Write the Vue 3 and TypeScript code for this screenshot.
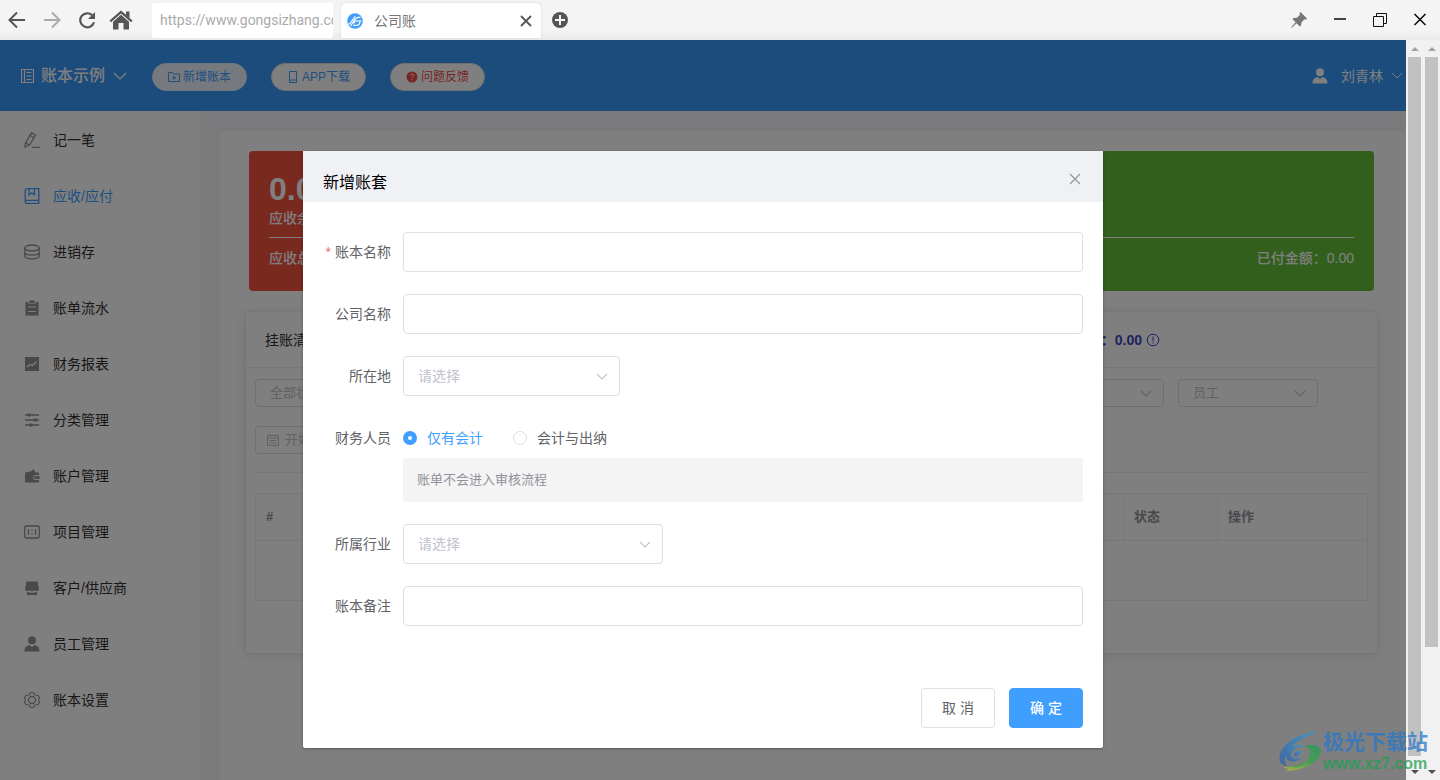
<script setup lang="ts">
import { ref } from 'vue'

interface MenuItem {
  label: string
  icon: string
}

const menu: MenuItem[] = [
  { label: '记一笔', icon: 'pen' },
  { label: '应收/应付', icon: 'book' },
  { label: '进销存', icon: 'coin' },
  { label: '账单流水', icon: 'order' },
  { label: '财务报表', icon: 'chart' },
  { label: '分类管理', icon: 'sliders' },
  { label: '账户管理', icon: 'wallet' },
  { label: '项目管理', icon: 'project' },
  { label: '客户/供应商', icon: 'shop' },
  { label: '员工管理', icon: 'user' },
  { label: '账本设置', icon: 'gear' },
]
const activeItem = ref('应收/应付')

const url = ref('https://www.gongsizhang.com')
const bookName = ref('')
const company = ref('')
const region = ref('')
const industry = ref('')
const remark = ref('')
const staff = ref('single')
</script>

<template>
  <div class="window">
    <header class="chrome">
      <nav class="chrome-nav">
        <button aria-label="后退">
          <svg width="18" height="18" viewBox="0 0 18 18"><path d="M17 9H2M9 1.5L1.5 9L9 16.500" fill="none" stroke="#555" stroke-width="2" /></svg>
        </button>
        <button aria-label="前进">
          <svg width="18" height="18" viewBox="0 0 18 18"><path d="M1 9H16M9 1.500L16.500 9L9 16.500" fill="none" stroke="#aaa" stroke-width="2" /></svg>
        </button>
        <button aria-label="刷新">
          <svg width="18" height="18" viewBox="0 0 18 18"><path d="M14.200 4.300A7 7 0 1 0 16 11.200" fill="none" stroke="#555" stroke-width="2.200" /><path d="M17 1V8H10Z" fill="#555" /></svg>
        </button>
        <button aria-label="主页">
          <svg width="24" height="20" viewBox="0 0 24 20"><path d="M12 0.500L23.500 10.600L22.100 12.200L12 3.400L1.900 12.200L0.500 10.600Z" fill="#555" /><path d="M17 1.500H20.500V8L17 5Z" fill="#555" /><path d="M12 4.800L20 11.700V19.500H14.500V13H9.500V19.500H4V11.700Z" fill="#555" /></svg>
        </button>
      </nav>
      <input v-model="url" class="address" type="text" aria-label="地址" />
      <div class="tab">
        <svg width="16" height="16" viewBox="0 0 16 16"><circle cx="8" cy="8" r="7.800" fill="#409eff" /><path d="M0.500 11.500L3 10.500L8.300 3.300M3.500 13L8 6.500C9 5 10 4.300 11.500 4.300H13.500M6.500 10.500L8.300 8H14.500M6.200 12.300H10.500C12 12 12.800 10.500 13 8.500" fill="none" stroke="#fff" stroke-width="1.200" /></svg>
        <span class="tab-title">公司账</span>
        <button aria-label="关闭标签">
          <svg width="12" height="12" viewBox="0 0 12 12"><path d="M1 1L11 11M11 1L1 11" stroke="#555" stroke-width="1.800" /></svg>
        </button>
      </div>
      <button class="add-tab" aria-label="新标签">
        <svg width="16" height="16" viewBox="0 0 16 16"><circle cx="8" cy="8" r="8" fill="#555" /><path d="M8 3V13M3 8H13" stroke="#f4f4f4" stroke-width="2" /></svg>
      </button>
      <div class="chrome-tools">
        <button aria-label="固定">
          <svg class="pin" width="16" height="16" viewBox="0 0 16 16"><path d="M9.500 0L16 6.500L14.600 7.800L13.400 7.300L10.500 10.400L10.100 13.400L8.800 14.600L5.600 11.200L0.800 15.800L0.200 15.200L4.600 10.200L1.400 7.100L2.600 5.900L5.900 5.700L9 2.700L8.400 1.300Z" fill="#777" /></svg>
        </button>
        <button aria-label="最小化">
          <svg width="14" height="14" viewBox="0 0 14 14"><path d="M1 6H13" stroke="#444" stroke-width="2" /></svg>
        </button>
        <button aria-label="还原">
          <svg width="14" height="14" viewBox="0 0 14 14"><path d="M0.500 3.500H10.500V13.500H0.500ZM3.500 3.500V0.500H13.500V10.500H10.500" fill="none" stroke="#111" /></svg>
        </button>
        <button aria-label="关闭">
          <svg width="14" height="14" viewBox="0 0 14 14"><path d="M1.500 1L12.500 12M12.500 1L1.500 12" stroke="#111" stroke-width="1.600" /></svg>
        </button>
      </div>
    </header>

    <div class="viewport">
      <div class="page">
        <div class="topbar">
          <button class="book-switch">
            <svg width="14" height="16" viewBox="0 0 14 16"><path d="M0.500 1.500H12.500V14.500H0.500ZM3.500 1.500V14.500M5.500 4.500H10.500M5.500 8H10.500M5.500 11.500H10.500" fill="none" stroke="#fff" stroke-width="1.200" /></svg>
            <span>账本示例</span>
            <svg class="switch-arrow" width="14" height="8" viewBox="0 0 14 8"><path d="M1 1L7 7L13 1" fill="none" stroke="#fff" stroke-width="1.200" /></svg>
          </button>
          <div class="pills">
            <button class="pill pill-active">
              <svg width="12" height="12" viewBox="0 0 12 12"><path d="M0.500 1.500H4.500L5.500 3H11.500V10.500H0.500ZM6 4.800V8.800M4 6.800H8" fill="none" stroke="currentColor" /></svg>
              新增账本
            </button>
            <button class="pill">
              <svg width="12" height="12" viewBox="0 0 12 12"><path d="M2.500 0.500H9.500V11.500H2.500ZM2.500 9H9.500" fill="none" stroke="currentColor" /></svg>
              APP下载
            </button>
            <button class="pill pill-danger">
              <svg width="12" height="12" viewBox="0 0 12 12"><circle cx="6" cy="6" r="5.500" fill="currentColor" /><path d="M4.300 4.700C4.300 2.500 7.700 2.500 7.700 4.700C7.700 6 6 5.800 6 7.300M6 8.300V9.400" fill="none" stroke="#fff" /></svg>
              问题反馈
            </button>
          </div>
          <button class="account">
            <svg width="16" height="16" viewBox="0 0 16 16"><circle cx="8" cy="4.300" r="4" fill="#fff" /><path d="M0.500 15.500C0.500 11.500 2.500 9.500 5.500 9L8 11L10.500 9C13.500 9.500 15.500 11.500 15.500 15.500Z" fill="#fff" /></svg>
            <span>刘青林</span>
            <svg width="12" height="7" viewBox="0 0 12 7"><path d="M1 1L6 6L11 1" fill="none" stroke="#fff" /></svg>
          </button>
        </div>

        <div class="body">
          <nav class="sidebar">
            <a v-for="item in menu" :key="item.label" href="#" class="menu-item" :class="{ active: item.label === activeItem }" @click.prevent="activeItem = item.label">
              <span class="menu-icon">
                <svg width="16" height="16" viewBox="0 0 16 16" fill="none" stroke="currentColor" stroke-width="1.300">
                  <template v-if="item.icon === 'pen'"><path d="M1 15L1.600 10.800L7.500 0.800L11.600 3.200L5.500 13.100ZM6 3.400L10.100 5.800M1.600 10.800L5.500 13.100M8 15.300H16" /></template>
                  <template v-else-if="item.icon === 'book'"><path d="M3 0.700H14.800V15.300H2.700C1.600 15.300 1.200 14.600 1.200 13.800V2.200C1.200 1.200 1.800 0.700 3 0.700ZM1.500 12.300H14.800M5 0.700V7L7.800 4.800L10.500 7V0.700" /></template>
                  <template v-else-if="item.icon === 'coin'"><ellipse cx="8" cy="4" rx="7.200" ry="3" /><path d="M0.800 4V11.800C0.800 16 15.200 16 15.200 11.800V4M0.800 7.900C0.800 12 15.200 12 15.200 7.900" /></template>
                  <template v-else-if="item.icon === 'order'"><path fill="currentColor" stroke="none" fill-rule="evenodd" d="M1.500 2H4V3.500H12V2H14.500V15.500H1.500ZM4 6.500V7.500H12V6.500ZM4 11V12H12V11ZM5 1H6.500V0.300H9.500V1H11V2.700H5Z" /></template>
                  <template v-else-if="item.icon === 'chart'"><path fill="currentColor" stroke="none" d="M1 1H15V15H1Z" /><path stroke="#fff" d="M3 11L6 8.500L8.500 9.500L12.500 5.500" /></template>
                  <template v-else-if="item.icon === 'sliders'"><path d="M1 3H15M1 8H15M1 13H15" /><path fill="currentColor" stroke="none" d="M3.500 1.500H6.500V4.500H3.500ZM9.500 6.500H12.500V9.500H9.500ZM5.500 11.500H8.500V14.500H5.500Z" /></template>
                  <template v-else-if="item.icon === 'wallet'"><path fill="currentColor" stroke="none" fill-rule="evenodd" d="M1 4.500L6.500 3.500L9.500 1.200L11.500 4.500H15V7H11C8.500 7 8.500 12 11 12H15V14.500H1ZM11 8H15.500V11H11C9.500 11 9.500 8 11 8ZM11.500 9V10H12.500V9Z" /></template>
                  <template v-else-if="item.icon === 'project'"><rect x="0.700" y="2" width="14.600" height="12" rx="1.500" /><path d="M4.500 5V11M11.500 5V11M8 5.500V7M8 9V10.500" /></template>
                  <template v-else-if="item.icon === 'shop'"><path fill="currentColor" stroke="none" d="M2.500 1.500H13.500L15 9C15 11.500 11.500 11.500 10.800 10C10 11.500 6 11.500 5.200 10C4.500 11.500 1 11.500 1 9ZM3 12H13V15H3Z" /><path stroke="#fff" stroke-width="0.800" d="M5 12.500H11" /></template>
                  <template v-else-if="item.icon === 'user'"><circle cx="8" cy="4.300" r="4" fill="currentColor" stroke="none" /><path fill="currentColor" stroke="none" d="M0.500 15.500C0.500 11.500 2.500 9.500 5.500 9L8 11L10.500 9C13.500 9.500 15.500 11.500 15.500 15.500Z" /></template>
                  <template v-else><path d="M6.300 0.800H9.700L10.400 2.400L12 3.300L14 3.200L15.600 6L14.500 7.500V8.500L15.600 10L14 12.800L12 12.700L10.400 13.600L9.700 15.200H6.300L5.600 13.600L4 12.700L2 12.800L0.400 10L1.500 8.500V7.500L0.400 6L2 3.200L4 3.300L5.600 2.400Z" stroke-linejoin="round" stroke-width="1.100" /><circle cx="8" cy="8" r="3.500" /></template>
                </svg>
              </span>
              {{ item.label }}
            </a>
          </nav>

          <main class="main">
            <div class="stats">
              <section class="stat stat-red">
                <strong>0.00</strong>
                <span>应收余额</span>
                <div class="stat-foot"><span>应收总额：0.00</span></div>
              </section>
              <section class="stat stat-green">
                <div class="stat-foot stat-foot-end"><span>已付金额：0.00</span></div>
              </section>
            </div>

            <section class="card">
              <div class="card-head">
                <h2>挂账清单</h2>
                <p class="total">
                  余额：0.00
                  <svg width="14" height="14" viewBox="0 0 14 14"><circle cx="7" cy="7" r="5.800" fill="none" stroke="currentColor" /><path d="M7 3.500V8.300M7 9.300V10.500" stroke="currentColor" /></svg>
                </p>
              </div>
              <div class="card-body">
                <div class="filters">
                  <span class="pick small">
                    <select aria-label="状态"><option>全部状态</option></select>
                    <svg width="12" height="7" viewBox="0 0 12 7"><path d="M1 1L6 6L11 1" /></svg>
                  </span>
                  <span class="pick small push">
                    <select aria-label="客户"><option></option></select>
                    <svg width="12" height="7" viewBox="0 0 12 7"><path d="M1 1L6 6L11 1" /></svg>
                  </span>
                  <span class="pick small">
                    <select aria-label="员工"><option>员工</option></select>
                    <svg width="12" height="7" viewBox="0 0 12 7"><path d="M1 1L6 6L11 1" /></svg>
                  </span>
                </div>
                <div class="filters dates">
                  <label class="date">
                    <svg width="12" height="12" viewBox="0 0 12 12"><path d="M0.500 1.500H11.500V11.500H0.500ZM0.500 4H11.500M3 0V2.500M9 0V2.500M2.500 6.500H9.500M2.500 9H9.500" fill="none" stroke="currentColor" /></svg>
                    <input type="text" placeholder="开始日期" />
                  </label>
                </div>
                <table class="grid">
                  <thead>
                    <tr><th class="col-index">#</th><th></th><th class="col-state">状态</th><th class="col-action">操作</th></tr>
                  </thead>
                  <tbody>
                    <tr><td colspan="4"></td></tr>
                  </tbody>
                </table>
              </div>
            </section>
          </main>
        </div>

        <div class="overlay">
          <div class="dialog" role="dialog" aria-labelledby="dialog-title">
            <div class="dialog-head">
              <h1 id="dialog-title">新增账套</h1>
              <button aria-label="关闭">
                <svg width="12" height="12" viewBox="0 0 12 12"><path d="M1 1L11 11M11 1L1 11" stroke="#909399" stroke-width="1.100" /></svg>
              </button>
            </div>
            <form class="form" @submit.prevent>
              <div class="row">
                <label class="label required" for="f-name">账本名称</label>
                <input id="f-name" v-model="bookName" class="text" type="text" />
              </div>
              <div class="row">
                <label class="label" for="f-company">公司名称</label>
                <input id="f-company" v-model="company" class="text" type="text" />
              </div>
              <div class="row">
                <label class="label" for="f-region">所在地</label>
                <span class="pick region">
                  <select id="f-region" v-model="region"><option value="">请选择</option></select>
                  <svg width="12" height="7" viewBox="0 0 12 7"><path d="M1 1L6 6L11 1" /></svg>
                </span>
              </div>
              <div class="row">
                <span class="label">财务人员</span>
                <div class="staff">
                  <div class="radios">
                    <label><input v-model="staff" type="radio" name="staff" value="single" /><span>仅有会计</span></label>
                    <label><input v-model="staff" type="radio" name="staff" value="both" /><span>会计与出纳</span></label>
                  </div>
                  <p class="hint">账单不会进入审核流程</p>
                </div>
              </div>
              <div class="row">
                <label class="label" for="f-industry">所属行业</label>
                <span class="pick industry">
                  <select id="f-industry" v-model="industry"><option value="">请选择</option></select>
                  <svg width="12" height="7" viewBox="0 0 12 7"><path d="M1 1L6 6L11 1" /></svg>
                </span>
              </div>
              <div class="row">
                <label class="label" for="f-remark">账本备注</label>
                <input id="f-remark" v-model="remark" class="text" type="text" />
              </div>
            </form>
            <div class="dialog-foot">
              <button class="btn">取 消</button>
              <button class="btn btn-primary">确 定</button>
            </div>
          </div>
        </div>
      </div>

      <div class="scrollbar">
        <i class="arrow up"></i>
        <div class="track"><div class="thumb thumb-inner"></div></div>
        <i class="arrow down"></i>
      </div>
      <div class="scrollbar">
        <i class="arrow up"></i>
        <div class="track"><div class="thumb thumb-outer"></div></div>
        <i class="arrow down"></i>
      </div>

      <div class="watermark">
        <svg width="44" height="42" viewBox="0 0 44 42">
          <defs>
            <linearGradient id="wm-blue" x1="1" y1="0" x2="0" y2="1"><stop offset="0" stop-color="#2aa0d8" /><stop offset="1" stop-color="#2f5fae" /></linearGradient>
            <linearGradient id="wm-green" x1="1" y1="0" x2="0" y2="1"><stop offset="0" stop-color="#1e9a58" /><stop offset="0.500" stop-color="#3da648" /><stop offset="1" stop-color="#d0d22c" /></linearGradient>
          </defs>
          <path d="M40 1C22 1 3 12 0.500 25C0 31 3 34 8 35C5 30 5 26 9 20C15 11 26 5 40 1Z" fill="url(#wm-blue)" />
          <path d="M26 15C16 11 6 18 7 26C8 32 18 32 24 26C18 29 12 28 12 24C12 19 19 15 26 15Z" fill="url(#wm-blue)" />
          <path d="M23 20C18 19 15 22 15 24C16 27 21 25 23 20Z" fill="url(#wm-blue)" />
          <path d="M24 15C34 12 42 15 42 21C40 32 24 40 5 40C18 37 30 31 31 23C32 18 29 16 24 15Z" fill="url(#wm-green)" />
          <path d="M27 30C20 35 12 36 4 36L9 38C17 38 24 35 27 30Z" fill="url(#wm-green)" />
        </svg>
        <div class="watermark-text">
          <span class="wm-name">极光下载站</span>
          <span class="wm-site">www.xz7.com</span>
        </div>
      </div>
    </div>
  </div>
</template>

<style>
body {
  margin: 0;
}
</style>

<style scoped>
* {
  box-sizing: border-box;
}
button,
input,
select {
  font: inherit;
  margin: 0;
}
button {
  border: 0;
  padding: 0;
  background: none;
  color: inherit;
  display: inline-flex;
  align-items: center;
  justify-content: center;
  cursor: pointer;
}
svg {
  display: block;
  flex: none;
}
h1,
h2,
p {
  margin: 0;
  font-weight: normal;
}
.window {
  height: 100vh;
  display: flex;
  flex-direction: column;
  overflow: hidden;
  font: 14px/20px 'Liberation Sans', 'Noto Sans CJK SC', sans-serif;
  color: #303133;
}

/* browser frame */
.chrome {
  flex: none;
  height: 40px;
  display: flex;
  align-items: center;
  background: linear-gradient(#f4f4f4 75%, #e9e9e9);
}
.chrome-nav {
  display: flex;
  align-items: center;
  gap: 17px;
  padding-left: 8px;
  width: 152px;
}
.chrome-nav button:last-child {
  margin-left: -4px;
}
.address {
  width: 181px;
  height: 35px;
  padding: 0 0 0 8px;
  border: 0;
  border-radius: 2px;
  background: #fff;
  color: #aaa;
  font-family: Roboto, sans-serif;
}
.tab {
  display: flex;
  align-items: center;
  align-self: flex-end;
  width: 200px;
  height: 35px;
  margin: 0 11px 2px 8px;
  padding: 0 9px 0 6px;
  background: #fff;
  border-radius: 5px 5px 0 0;
  box-shadow: 0 0 2px #ccc;
}
.tab-title {
  flex: 1;
  padding-left: 11px;
  color: #777;
}
.chrome-tools {
  margin-left: auto;
  padding-right: 13px;
  display: flex;
  align-items: center;
  gap: 26px;
}

.viewport {
  flex: 1;
  min-height: 0;
  display: flex;
  position: relative;
}
.page {
  flex: 1;
  min-width: 0;
  position: relative;
  overflow: hidden;
  display: flex;
  flex-direction: column;
  background: #f4f4fa;
}

/* application header */
.topbar {
  flex: none;
  height: 71px;
  display: flex;
  align-items: center;
  padding: 0 3px 0 21px;
  background: #3698f8;
  color: #fff;
}
.book-switch {
  gap: 6px;
  font-size: 16px;
  font-weight: 500;
}
.switch-arrow {
  margin-left: 2px;
}
.pills {
  display: flex;
  gap: 24px;
  margin: 2px 0 0 25px;
}
.pill {
  width: 95px;
  height: 28px;
  gap: 3px;
  border: 1px solid #dcdfe6;
  border-radius: 14px;
  background: #fff;
  color: #409eff;
  font-size: 12px;
}
.pill-active {
  background: #ecf5ff;
  border-color: #d9ecff;
}
.pill-danger {
  color: #f04a4a;
}
.account {
  margin-left: auto;
}
.account span {
  margin: 0 8px 0 13px;
}

.body {
  flex: 1;
  min-height: 0;
  display: flex;
}
.sidebar {
  flex: none;
  width: 200px;
  padding-top: 1px;
  background: #fff;
}
.menu-item {
  height: 56px;
  padding-left: 20px;
  display: flex;
  align-items: center;
  gap: 9px;
  color: #303133;
  text-decoration: none;
}
.menu-icon {
  width: 24px;
  display: flex;
  justify-content: center;
  color: #909399;
}
.menu-item.active,
.active .menu-icon {
  color: #409eff;
}
.main {
  flex: 1;
  min-width: 0;
  margin: 20px 0 0 20px;
  padding: 20px 28px 0 25px;
  background: #fff;
  border-radius: 4px 0 0 0;
}
.stats {
  display: flex;
  gap: 20px;
  margin: 0 4px;
}
.stat {
  flex: 1;
  height: 140px;
  padding: 20px;
  border-radius: 4px;
  color: #fff;
  font-weight: 500;
  display: flex;
  flex-direction: column;
}
.stat-red {
  background: #f4523c;
}
.stat-green {
  background: #64c038;
}
.stat strong {
  font-size: 32px;
  line-height: 37px;
}
.stat-foot {
  margin-top: auto;
  padding-top: 10px;
  border-top: 1px solid #fff;
  height: 34px;
}
.stat-foot-end {
  text-align: right;
}
.card {
  margin-top: 20px;
  height: 343px;
  border: 1px solid #ebeef5;
  border-radius: 4px;
  background: #fff;
  box-shadow: 0 2px 12px rgba(0, 0, 0, 0.1);
}
.card-head {
  height: 56px;
  padding: 0 217px 0 19px;
  display: flex;
  align-items: center;
  justify-content: space-between;
  border-bottom: 1px solid #ebeef5;
}
.card-head h2 {
  font-size: 14px;
}
.total {
  display: flex;
  align-items: center;
  gap: 4px;
  color: #3e46be;
  font-weight: bold;
}
.card-body {
  padding: 11px 9px;
}
.filters {
  display: flex;
  gap: 14px;
  padding-right: 50px;
}
.push {
  margin-left: auto;
}
.dates {
  padding: 19px 0 18px;
  border-bottom: 1px solid #ebeef5;
}
.date {
  width: 230px;
  height: 28px;
  padding: 0 11px;
  display: flex;
  align-items: center;
  gap: 6px;
  border: 1px solid #dcdfe6;
  border-radius: 4px;
  color: #c0c4cc;
}
.date input {
  flex: 1;
  min-width: 0;
  border: 0;
  padding: 0;
  font-size: 13px;
  background: none;
}
.date input::placeholder {
  color: #c0c4cc;
}
.grid {
  width: 100%;
  margin-top: 20px;
  border-collapse: collapse;
  table-layout: fixed;
  font-size: 13px;
  color: #909399;
}
.grid th,
.grid td {
  padding: 0 10px;
  border: 1px solid #ebeef5;
  text-align: left;
}
.grid th {
  height: 47px;
}
.grid td {
  height: 60px;
}
.grid .col-index {
  width: 80px;
}
.grid .col-state {
  width: 94px;
}
.grid .col-action {
  width: 150px;
}

/* drop-downs */
.pick {
  position: relative;
  display: flex;
  align-items: center;
  height: 40px;
}
.pick select {
  width: 100%;
  height: 100%;
  padding: 0 30px 0 14px;
  appearance: none;
  border: 1px solid #dcdfe6;
  border-radius: 4px;
  background: #fff;
  color: #c0c4cc;
}
.pick svg {
  position: absolute;
  right: 12px;
  fill: none;
  stroke: #c0c4cc;
  stroke-width: 1.2;
  pointer-events: none;
}
.pick.small {
  width: 140px;
  height: 28px;
  font-size: 13px;
}
.pick.region {
  width: 217px;
}
.pick.industry {
  width: 260px;
}

/* dialog */
.overlay {
  position: absolute;
  inset: 0;
  display: flex;
  justify-content: center;
  align-items: flex-start;
  padding-top: 111px;
  background: rgba(0, 0, 0, 0.5);
}
.dialog {
  width: 800px;
  background: #fff;
  border-radius: 2px;
  box-shadow: 0 1px 3px rgba(0, 0, 0, 0.3);
}
.dialog-head {
  display: flex;
  align-items: center;
  justify-content: space-between;
  height: 51px;
  padding: 5px 22px 0 20px;
  background: #f0f1f5;
}
.dialog-head h1 {
  font-size: 16px;
  line-height: 24px;
  padding-top: 7px;
  color: #000;
}
.form {
  padding: 30px 20px;
  color: #606266;
}
.row {
  display: flex;
  margin-bottom: 22px;
}
.label {
  flex: none;
  width: 80px;
  padding-right: 12px;
  line-height: 40px;
  text-align: right;
  white-space: nowrap;
}
.required::before {
  content: '*';
  margin-right: 4px;
  color: #f56c6c;
}
.text {
  flex: 1;
  min-width: 0;
  height: 40px;
  padding: 0 15px;
  border: 1px solid #dcdfe6;
  border-radius: 4px;
  color: #606266;
}
.staff {
  flex: 1;
}
.radios {
  display: flex;
  gap: 30px;
  height: 40px;
}
.radios label {
  display: flex;
  align-items: center;
  gap: 10px;
}
.radios input {
  appearance: none;
  width: 14px;
  height: 14px;
  border: 1px solid #dcdfe6;
  border-radius: 50%;
  background: #fff;
}
.radios input:checked {
  border: 5px solid #409eff;
}
.radios input:checked + span {
  color: #409eff;
}
.hint {
  padding: 0 14px;
  font-size: 13px;
  line-height: 44px;
  color: #909399;
  background: #f4f4f5;
  border-radius: 2px;
}
.dialog-foot {
  display: flex;
  justify-content: flex-end;
  gap: 14px;
  padding: 10px 20px 20px;
}
.btn {
  width: 74px;
  height: 40px;
  border: 1px solid #dcdfe6;
  border-radius: 4px;
  background: #fff;
  color: #606266;
}
.btn-primary {
  border-color: #409eff;
  background: #409eff;
  color: #fff;
  font-weight: 500;
}

/* scroll bars */
.scrollbar {
  flex: none;
  width: 17px;
  display: flex;
  flex-direction: column;
  align-items: center;
  background: #f1f1f1;
}
.track {
  flex: 1;
  min-height: 0;
}
.thumb {
  width: 13px;
  background: #c1c1c1;
}
.thumb-inner {
  height: 99%;
}
.thumb-outer {
  height: 83.5%;
}
.arrow {
  margin: 7px 0 6px;
  border: 4px solid transparent;
}
.up {
  border-top: 0;
  border-bottom-color: #a3a3a3;
}
.down {
  border-bottom: 0;
  border-top-color: #505050;
}

/* site mark over the page corner */
.watermark {
  position: absolute;
  right: 12px;
  bottom: 7px;
  display: flex;
  align-items: center;
  pointer-events: none;
  opacity: 0.75;
}
.watermark-text {
  display: flex;
  flex-direction: column;
  white-space: nowrap;
}
.wm-name {
  font-size: 21px;
  line-height: 24px;
  font-weight: bold;
  color: #2878c8;
}
.wm-site {
  font-size: 16px;
  line-height: 19px;
  font-weight: bold;
  color: #1ea050;
}
</style>
